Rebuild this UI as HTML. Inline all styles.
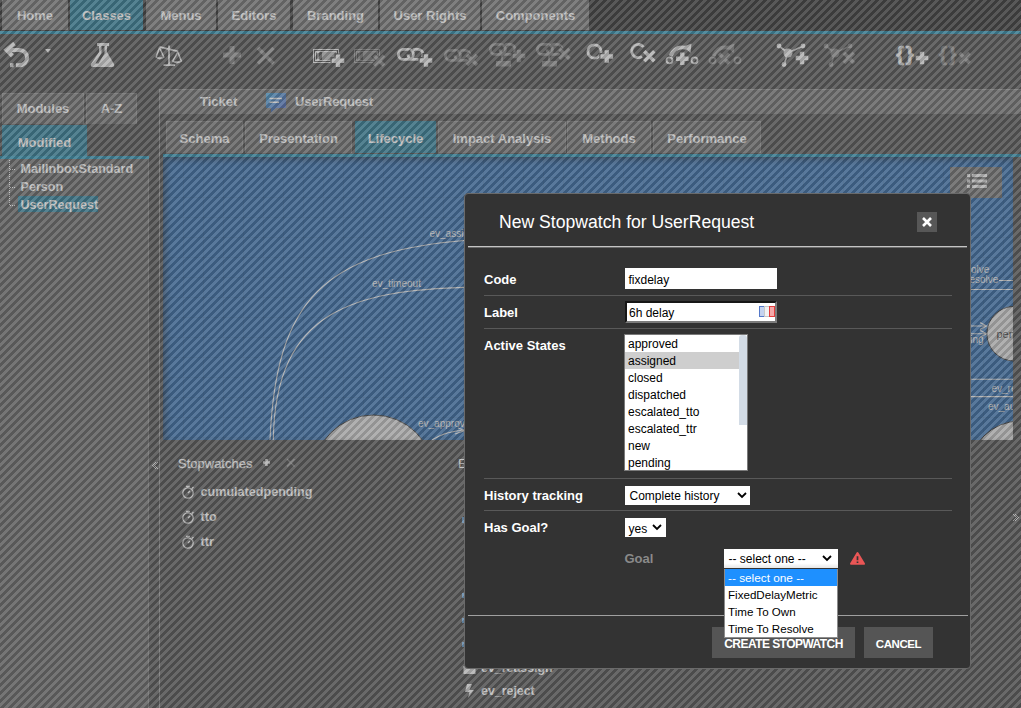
<!DOCTYPE html>
<html><head><meta charset="utf-8">
<style>
*{box-sizing:border-box;margin:0;padding:0}
html,body{width:1021px;height:708px;overflow:hidden}
body{position:relative;background:#474747;font-family:"Liberation Sans",sans-serif;color:#e0e0e0}
.a{position:absolute}
.t{position:absolute;white-space:nowrap;line-height:15px;font-size:13px;color:#fff}
.topbar{left:0;top:0;width:1021px;height:31px;background:#262626}
.tab{position:absolute;top:0;height:30px;background:#747474;color:#fff;font-weight:bold;font-size:13px;text-align:center;line-height:15px;padding-top:8px}
.tab.on{background:#1f7a98}
.tabline{left:0;top:31px;width:1021px;height:3px;background:#1f8fb3}
.ltab{position:absolute;background:#6a6a6a;border:1px solid #7e7e7e;border-bottom:none;color:#fff;font-weight:bold;font-size:13px;text-align:center;line-height:15px}
.ltab.on{background:#1f7a98;border-color:#1f7a98}
.overlay{left:-8px;top:0;width:1040px;height:708px;background-image:repeating-linear-gradient(-45deg,rgba(139,139,139,.5) 0px,rgba(139,139,139,.5) 2.83px,rgba(81,81,81,.5) 2.83px,rgba(81,81,81,.5) 5.66px)}
.modal{left:464px;top:193px;width:507px;height:476px;background:#333;border:1px solid #6a6a6a;border-radius:4px;color:#fff}
.lbl{position:absolute;left:19px;font-weight:bold;font-size:13px;color:#fff;line-height:15px;white-space:nowrap}
.sep{position:absolute;left:19px;width:468px;height:1px;background:#595959}
.inp{position:absolute;background:#fff;color:#000;font-size:12px;line-height:14px;white-space:nowrap}
.opt{height:17px;line-height:18px;padding-left:3px}
</style></head><body>
<!-- top bar -->
<div class="a topbar"></div>
<div class="tab" style="left:2px;width:66px">Home</div>
<div class="tab on" style="left:70px;width:73px">Classes</div>
<div class="tab" style="left:146px;width:70px">Menus</div>
<div class="tab" style="left:218px;width:72px">Editors</div>
<div class="tab" style="left:293px;width:85px">Branding</div>
<div class="tab" style="left:380px;width:100px">User Rights</div>
<div class="tab" style="left:482px;width:107px">Components</div>
<div class="a tabline"></div>

<!-- toolbar icons -->
<svg class="a" style="left:0;top:0" width="1021" height="90" viewBox="0 0 1021 90">
<defs>
<g id="pl"><path d="M-7.5 0H7.5M0 -7.5V7.5" stroke="#474747" stroke-width="7" fill="none"/><path d="M-6.3 0H6.3M0 -6.3V6.3" stroke-width="4.4" fill="none"/></g>
<g id="xx"><path d="M-6 -6L6 6M6 -6L-6 6" stroke="#474747" stroke-width="6" fill="none"/><path d="M-5 -5L5 5M5 -5L-5 5" stroke-width="3.6" fill="none"/></g>
<g id="chain" fill="none" stroke-width="2.8">
<rect x="1.4" y="1.4" width="15" height="10" rx="5"/><path d="M16 2.2A5 5 0 0 1 20.5 1.4H21A5 5 0 0 1 21 11.4H16A5 5 0 0 1 11 6.4"/>
<path d="M11.6 3.2A5 5 0 0 1 13.5 1.8" stroke="#474747" stroke-width="1.2"/>
</g>
</defs>
<g fill="#eee" stroke="#eee">
 <!-- undo -->
 <path d="M9 50H19.5A7.6 7.6 0 0 1 19.5 65.2H16" fill="none" stroke-width="4"/>
 <path d="M14.5 43.5L6.5 50L12.5 56" fill="none" stroke-width="4.2" stroke-linejoin="miter"/>
 <rect x="10" y="63.2" width="3.5" height="4" stroke="none"/>
 <path d="M45 49H51L48 53Z" stroke="none"/>
 <!-- flask -->
 <path d="M97 43H109V46H107V52L114 64Q115 67 112 67H93Q90 67 91 64L99 52V46H97Z" stroke="none"/>
 <path d="M101.5 46V53L95.5 63.5H98.5L104.5 53.5V46Z" fill="#474747" stroke="none"/>
 <!-- scales -->
 <g fill="none" stroke-width="1.5">
  <path d="M169 45.5V64.5M163.5 65.2H175M159.5 46.8L178.2 51.4" stroke-width="1.8"/>
  <path d="M159.5 47.5L156 57.5M159.5 47.5L164 57.5M177.8 52L172.5 61.5M177.8 52L181.5 61.5"/>
 </g>
 <path d="M155.3 57.3H164.7Q160 61.5 155.3 57.3Z" stroke="none"/>
 <path d="M171.8 61.3H182.2Q177 65.5 171.8 61.3Z" stroke="none"/>
 <!-- field add -->
 <rect x="313.5" y="49.5" width="25" height="13" fill="none" stroke-width="1"/>
 <rect x="315.5" y="51.5" width="21" height="9" fill="none" stroke-width="1"/>
 <path d="M322 52H336V60H322Z" fill="#aaa" stroke="none"/>
 <path d="M318 52.5V59.5M316.5 52.5H319.5M316.5 59.5H319.5" fill="none" stroke-width="1"/>
 <use href="#pl" x="338" y="60.8"/>
 <!-- link add -->
 <use href="#chain" x="397" y="48"/>
 <use href="#pl" x="426" y="60.5"/>
 <!-- state add -->
 <circle cx="594.5" cy="51.5" r="6.6" fill="none" stroke-width="2.8"/>
 <use href="#pl" x="606.8" y="56.5"/>
 <!-- state remove -->
 <path d="M643.5 47A6.6 6.6 0 1 0 642 56.5" fill="none" stroke-width="2.8"/>
 <use href="#xx" x="649.3" y="56.3"/>
 <!-- transition add -->
 <path d="M670.5 56Q675 45 687 48" fill="none" stroke-width="3.8"/>
 <path d="M683.5 46.5L691.5 43.5L690.5 53Z" stroke="none"/>
 <circle cx="669.5" cy="60.3" r="3" fill="none" stroke-width="1.8"/>
 <circle cx="694.5" cy="60.3" r="3" fill="none" stroke-width="1.8"/>
 <use href="#pl" x="682.3" y="58.8"/>
 <!-- attribute add -->
 <path d="M779 46L788 53L803 46M788 53L784 64.5" fill="none" stroke-width="1.6"/>
 <circle cx="788" cy="53" r="4.5" stroke="none"/>
 <circle cx="779" cy="46" r="2.4" stroke="none"/><circle cx="803" cy="46" r="2.4" stroke="none"/><circle cx="784" cy="64.5" r="2.4" stroke="none"/>
 <use href="#pl" x="802" y="58"/>
 <!-- braces add -->
 <text x="896" y="61" font-size="20" font-weight="bold" letter-spacing="2" stroke-width="0.7" font-family="Liberation Sans">{}</text>
 <use href="#pl" x="922" y="58"/>
</g>
<g fill="#8c8c8c" stroke="#8c8c8c">
 <path d="M223 55H241M232 46V64" stroke-width="5" fill="none"/>
 <path d="M258 48L273.5 63.5M273.5 48L258 63.5" stroke-width="3.6" fill="none"/>
 <!-- field remove -->
 <rect x="354.5" y="49.5" width="25" height="13" fill="none" stroke-width="1"/>
 <rect x="356.5" y="51.5" width="21" height="9" fill="none" stroke-width="1"/>
 <path d="M363 52H377V60H363Z" fill="#777" stroke="none"/>
 <path d="M359 52.5V59.5M357.5 52.5H360.5M357.5 59.5H360.5" fill="none" stroke-width="1"/>
 <use href="#xx" x="379" y="60.5"/>
 <!-- link remove -->
 <use href="#chain" x="444" y="49"/>
 <use href="#xx" x="472" y="60"/>
 <!-- indirect add -->
 <use href="#chain" x="489" y="43"/>
 <path d="M502 55V61" fill="none" stroke-width="1.5"/>
 <rect x="496" y="61" width="15" height="5.5" stroke="none"/>
 <use href="#pl" x="519" y="56"/>
 <!-- indirect remove -->
 <use href="#chain" x="536" y="43"/>
 <path d="M549 55V61" fill="none" stroke-width="1.5"/>
 <rect x="542" y="61" width="15" height="5.5" stroke="none"/>
 <use href="#xx" x="564.5" y="54"/>
 <!-- transition remove -->
 <path d="M713.5 56Q718 45 730 48" fill="none" stroke-width="3.8"/>
 <path d="M726.5 46.5L734.5 43.5L733.5 53Z" stroke="none"/>
 <circle cx="712.5" cy="60.3" r="3" fill="none" stroke-width="1.8"/>
 <circle cx="737.5" cy="60.3" r="3" fill="none" stroke-width="1.8"/>
 <use href="#xx" x="724" y="58.5"/>
 <!-- attribute remove -->
 <path d="M826 46L835 53L850 46M835 53L831 64.5" fill="none" stroke-width="1.6"/>
 <circle cx="835" cy="53" r="4.5" stroke="none"/>
 <circle cx="826" cy="46" r="2.4" stroke="none"/><circle cx="850" cy="46" r="2.4" stroke="none"/><circle cx="831" cy="64.5" r="2.4" stroke="none"/>
 <use href="#xx" x="849" y="58"/>
 <!-- braces remove -->
 <text x="939" y="61" font-size="20" font-weight="bold" letter-spacing="2" stroke-width="0.7" font-family="Liberation Sans">{}</text>
 <use href="#xx" x="964.5" y="58"/>
</g>
</svg>

<!-- left panel -->
<div class="ltab" style="left:2px;top:93px;width:82px;height:31px;padding-top:7px">Modules</div>
<div class="ltab" style="left:86px;top:93px;width:51px;height:31px;padding-top:7px">A-Z</div>
<div class="ltab on" style="left:2px;top:125px;width:85px;height:31px;padding-top:8.5px">Modified</div>
<div class="a" style="left:0;top:156px;width:149px;height:3px;background:#1f8fb3"></div>
<div class="a" style="left:0;top:159px;width:149px;height:549px;background:#606060;border-right:1px solid #7c7c7c"></div>
<svg class="a" style="left:0;top:150px" width="30" height="70">
 <path d="M9.5 10V56M10 19.5H15M10 37.5H15M10 55.5H15" stroke="#fff" stroke-width="1" stroke-dasharray="1 1" fill="none"/>
</svg>
<div class="a" style="left:18px;top:196px;width:80px;height:16px;background:#1f7a98"></div>
<div class="t" style="left:20.5px;top:162px;font-weight:bold;font-size:12.6px">MailInboxStandard</div>
<div class="t" style="left:20.5px;top:180px;font-weight:bold;font-size:12.6px">Person</div>
<div class="t" style="left:20.5px;top:198px;font-weight:bold;font-size:12.6px">UserRequest</div>

<!-- right container -->
<div class="a" style="left:159px;top:89px;width:862px;height:25px;background:#6c6c6c;border-top:1px solid #8a8a8a;border-left:1px solid #8a8a8a"></div>
<div class="t" style="left:200px;top:94px;font-weight:bold">Ticket</div>
<svg class="a" style="left:265px;top:92px" width="22" height="22">
 <defs><linearGradient id="bg1" x1="0" y1="0" x2="1" y2="1"><stop offset="0" stop-color="#3aa0d8"/><stop offset="1" stop-color="#4a5ab8"/></linearGradient></defs>
 <path d="M1 1H21V16H11L6 20.5V16H1Z" fill="url(#bg1)"/>
 <path d="M4.5 6.5H17M4.5 10.3H14" stroke="#fff" stroke-width="1.6"/>
</svg>
<div class="t" style="left:295px;top:94px;font-weight:bold;letter-spacing:-0.2px">UserRequest</div>
<div class="a" style="left:159px;top:114px;width:1px;height:594px;background:#8a8a8a"></div>
<div class="a" style="left:149px;top:158px;width:10px;height:550px;background:#474747"></div>
<div class="ltab" style="left:166px;top:121px;width:77px;height:32px;padding-top:9px">Schema</div>
<div class="ltab" style="left:245px;top:121px;width:107px;height:32px;padding-top:9px">Presentation</div>
<div class="ltab on" style="left:355px;top:121px;width:81px;height:32px;padding-top:9px">Lifecycle</div>
<div class="ltab" style="left:438px;top:121px;width:128px;height:32px;padding-top:9px">Impact Analysis</div>
<div class="ltab" style="left:567px;top:121px;width:84px;height:32px;padding-top:9px">Methods</div>
<div class="ltab" style="left:653px;top:121px;width:108px;height:32px;padding-top:9px">Performance</div>
<div class="a" style="left:163px;top:154px;width:858px;height:3px;background:#1f8fb3"></div>

<!-- graph -->
<svg class="a" style="left:163px;top:157px" width="850" height="283" viewBox="163 157 850 283">
 <rect x="163" y="157" width="850" height="283" fill="#2666ac"/>
 <defs><pattern id="grid" x="164" y="158" width="20" height="20" patternUnits="userSpaceOnUse"><path d="M19.5 0V20M0 19.5H20" stroke="#000" stroke-opacity=".07" stroke-width="1" fill="none"/></pattern></defs>
 <rect x="163" y="157" width="850" height="283" fill="url(#grid)"/>
 <g fill="none" stroke="#e8e8e8" stroke-width="1.1">
  <path d="M270 440C276 300 323.5 251 470 240"/>
  <path d="M273.3 440C275 309.5 355 290.3 470 287.1"/>
  <path d="M432 440Q446 431 466 430M458 428L465 430.5L455 434"/>
  <path d="M999 280.5H1013M971 289.5H1013M971 379.3H1013M971 396.6H1013"/>
  <path d="M971 326H986M971 333.8H986M980 322.5L986.5 326L980 329.5M980 330.3L986.5 333.8L980 337.3"/>
 </g>
 <circle cx="373.5" cy="475.5" r="60.5" fill="#d6d6d6" stroke="#2a2a2a" stroke-width="1"/>
 <circle cx="1014.2" cy="333.7" r="27.3" fill="#d6d6d6" stroke="#2a2a2a" stroke-width="1"/>
 <circle cx="1020" cy="472" r="51" fill="#d6d6d6" stroke="#2a2a2a" stroke-width="1"/>
 <g font-family="Liberation Sans" font-size="10" fill="#e8e8e8">
  <text x="429.5" y="236.5">ev_assign</text>
  <text x="372" y="286.5">ev_timeout</text>
  <text x="418" y="427">ev_approve</text>
  <text x="957" y="272.5">resolve</text>
  <text x="950" y="282.5">ev_resolve</text>
  <text x="991.5" y="391.5">ev_reopen</text>
  <text x="988" y="410">ev_autoclose</text>
  <text x="948" y="342.5">pending</text>
 </g>
 <text x="996.5" y="338" font-family="Liberation Sans" font-size="11" fill="#333">pending</text>
</svg>
<div class="a" style="left:163px;top:157px;width:850px;height:283px;box-shadow:inset 3px 3px 6px rgba(0,0,0,.45)"></div>
<div class="a" style="left:950px;top:167px;width:52px;height:31px;background:#6c6c6c"></div>
<svg class="a" style="left:965px;top:172px" width="24" height="20">
 <g fill="#eee"><rect x="2" y="2" width="3" height="3"/><rect x="2" y="7.5" width="3" height="3"/><rect x="2" y="13" width="3" height="3"/>
 <rect x="7" y="2" width="15" height="3"/><rect x="7" y="7.5" width="15" height="3"/><rect x="7" y="13" width="15" height="3"/></g>
</svg>

<!-- bottom panel -->
<svg class="a" style="left:149px;top:455px" width="12" height="20" shape-rendering="crispEdges"><g fill="#ddd"><rect x="6" y="7" width="1" height="1"/><rect x="5" y="8" width="1" height="1"/><rect x="4" y="9" width="1" height="1"/><rect x="3" y="10" width="1" height="1"/><rect x="4" y="11" width="1" height="1"/><rect x="5" y="12" width="1" height="1"/><rect x="6" y="13" width="1" height="1"/><rect x="8" y="7" width="1" height="1"/><rect x="7" y="8" width="1" height="1"/><rect x="6" y="9" width="1" height="1"/><rect x="5" y="10" width="1" height="1"/><rect x="6" y="11" width="1" height="1"/><rect x="7" y="12" width="1" height="1"/><rect x="8" y="13" width="1" height="1"/></g></svg>
<svg class="a" style="left:1010px;top:507px" width="11" height="20" shape-rendering="crispEdges"><g fill="#ddd"><rect x="3" y="7" width="1" height="1"/><rect x="4" y="8" width="1" height="1"/><rect x="5" y="9" width="1" height="1"/><rect x="6" y="10" width="1" height="1"/><rect x="5" y="11" width="1" height="1"/><rect x="4" y="12" width="1" height="1"/><rect x="3" y="13" width="1" height="1"/><rect x="5" y="7" width="1" height="1"/><rect x="6" y="8" width="1" height="1"/><rect x="7" y="9" width="1" height="1"/><rect x="8" y="10" width="1" height="1"/><rect x="7" y="11" width="1" height="1"/><rect x="6" y="12" width="1" height="1"/><rect x="5" y="13" width="1" height="1"/></g></svg>
<div class="t" style="left:178px;top:455.5px;color:#fff;-webkit-text-stroke:0.25px #fff">Stopwatches</div>
<svg class="a" style="left:258px;top:455px" width="45" height="16">
 <path d="M8.5 4V11M5 7.5H12" stroke="#eee" stroke-width="2.6"/>
 <path d="M29 4L36.5 11.5M36.5 4L29 11.5" stroke="#8c8c8c" stroke-width="1.3"/>
</svg>
<svg class="a" style="left:180px;top:484px" width="16" height="70">
 <g fill="none" stroke="#eee" stroke-width="1.3">
  <circle cx="8" cy="9" r="5.2"/><path d="M6 2.5H10M8 2.5V4M12 4.5L13.5 3M8 9L10 7"/>
  <circle cx="8" cy="34" r="5.2"/><path d="M6 27.5H10M8 27.5V29M12 29.5L13.5 28M8 34L10 32"/>
  <circle cx="8" cy="59" r="5.2"/><path d="M6 52.5H10M8 52.5V54M12 54.5L13.5 53M8 59L10 57"/>
 </g>
</svg>
<div class="t" style="left:200.5px;top:485px;font-weight:bold;font-size:12.6px">cumulatedpending</div>
<div class="t" style="left:200.5px;top:510px;font-weight:bold;font-size:12.6px">tto</div>
<div class="t" style="left:200.5px;top:535px;font-weight:bold;font-size:12.6px">ttr</div>
<div class="t" style="left:458px;top:455.5px;color:#fff">Events</div>
<div class="a" style="left:462px;top:517px;width:2px;height:6px;background:#6aa8e0"></div>
<div class="a" style="left:462px;top:593px;width:2px;height:5px;background:#6aa8e0"></div>
<div class="a" style="left:462px;top:618px;width:2px;height:5px;background:#6aa8e0"></div>
<div class="a" style="left:462px;top:642px;width:2px;height:5px;background:#6aa8e0"></div>
<svg class="a" style="left:460px;top:660px" width="20" height="45">
 <rect x="3.5" y="6" width="12" height="8" fill="#eee"/>
 <path d="M7 24L12 24L9.5 30L14 30L8 38L9.5 32L5 32Z" fill="#eee"/>
</svg>
<div class="t" style="left:481px;top:660.5px;font-weight:bold;font-size:12.4px">ev_reassign</div>
<div class="t" style="left:481px;top:683.5px;font-weight:bold;font-size:12.4px">ev_reject</div>

<!-- overlay -->
<div class="a overlay"></div>

<!-- modal -->
<div class="a modal">
  <div class="a" style="left:34px;top:18px;font-size:17.6px;line-height:20px;color:#fff;white-space:nowrap">New Stopwatch for UserRequest</div>
  <div class="a" style="left:452px;top:18px;width:20px;height:20px;background:#575757"></div>
  <svg class="a" style="left:452px;top:18px" width="20" height="20"><path d="M6 6L14 14M14 6L6 14" stroke="#fff" stroke-width="2.6"/></svg>
  <div class="a" style="left:3px;top:52px;width:499px;height:1px;background:#c4c4c4"></div><div class="a" style="left:3px;top:53px;width:499px;height:1px;background:#6a6a6a"></div>

  <div class="lbl" style="top:78px">Code</div>
  <div class="inp" style="left:159.5px;top:74px;width:152px;height:21px;padding:5px 0 0 4px">fixdelay</div>
  <div class="sep" style="top:101px"></div>
  <div class="lbl" style="top:110.5px">Label</div>
  <div class="inp" style="left:160px;top:107px;width:152px;height:22px;border-top:2px solid #161616;border-left:2px solid #161616;border-bottom:2px solid #7c7c7c;border-right:2px solid #7c7c7c;padding:2.5px 0 0 2px">6h delay</div>
  <svg class="a" style="left:294px;top:112px" width="17" height="12" shape-rendering="crispEdges">
   <rect x="0.5" y="0.5" width="5" height="10" fill="#c4d2ee" stroke="#5478c8"/>
   <rect x="5.5" y="0.5" width="5" height="10" fill="#f2f2f2" stroke="#c8c8c8"/>
   <rect x="10.5" y="0.5" width="5" height="10" fill="#f4a8a8" stroke="#e43c3c"/>
  </svg>
  <div class="sep" style="top:134px"></div>
  <div class="lbl" style="top:143.5px">Active States</div>
  <div class="inp" style="left:159px;top:140px;width:124px;height:137px;border:1px solid #7a7a7a;overflow:hidden;padding-top:0px">
    <div class="opt">approved</div>
    <div class="opt" style="background:#cecece;width:114px">assigned</div>
    <div class="opt">closed</div>
    <div class="opt">dispatched</div>
    <div class="opt">escalated_tto</div>
    <div class="opt">escalated_ttr</div>
    <div class="opt">new</div>
    <div class="opt">pending</div>
    <div class="a" style="left:114px;top:0px;width:8px;height:90px;background:#d3dce6;border-radius:3px 3px 0 0"></div>
  </div>
  <div class="sep" style="top:284px"></div>
  <div class="lbl" style="top:294px">History tracking</div>
  <div class="inp" style="left:159.5px;top:292px;width:125px;height:18.5px;padding:3px 0 0 5px">Complete history</div>
  <svg class="a" style="left:271px;top:296px" width="12" height="10"><path d="M2 3L6 7L10 3" stroke="#000" stroke-width="1.8" fill="none"/></svg>
  <div class="sep" style="top:316px"></div>
  <div class="lbl" style="top:325.5px">Has Goal?</div>
  <div class="inp" style="left:159.5px;top:324px;width:41px;height:18.5px;padding:3.5px 0 0 4px">yes</div>
  <svg class="a" style="left:186px;top:328px" width="12" height="10"><path d="M2 3L6 7L10 3" stroke="#000" stroke-width="1.8" fill="none"/></svg>
  <div class="lbl" style="left:159.5px;top:356.5px;color:#8a8a8a">Goal</div>
  <div class="inp" style="left:258.5px;top:354.5px;width:114px;height:19px;background:linear-gradient(#fff 75%,#e6e6e6);padding:3px 0 0 5px">-- select one --</div>
  <svg class="a" style="left:356px;top:359px" width="12" height="10"><path d="M2 3L6 7L10 3" stroke="#000" stroke-width="1.8" fill="none"/></svg>
  <svg class="a" style="left:384px;top:357px" width="18" height="15"><path d="M8.5 2L15 12.8H2Z" fill="#ea5656" stroke="#ea5656" stroke-width="2" stroke-linejoin="round"/><path d="M8.5 5.2V9.2M8.5 10.4V12" stroke="#333" stroke-width="1.7"/></svg>
  <div class="inp" style="left:258.5px;top:374.5px;width:114px;height:69px;border:1px solid #8c8c8c;border-top:none;overflow:hidden;z-index:3">
    <div class="opt" style="background:#1e90ff;color:#fff;padding-left:3.5px;line-height:18px;font-size:11.8px">-- select one --</div>
    <div class="opt" style="padding-left:3.5px;line-height:18px;font-size:11.6px">FixedDelayMetric</div>
    <div class="opt" style="padding-left:3.5px;line-height:18px;font-size:11.6px">Time To Own</div>
    <div class="opt" style="padding-left:3.5px;line-height:18px;font-size:11.6px">Time To Resolve</div>
  </div>
  <div class="a" style="left:3px;top:421px;width:500px;height:1px;background:#a0a0a0"></div>
  <div class="a" style="left:247px;top:433px;width:143px;height:31px;background:#555;color:#fff;font-weight:bold;font-size:12px;letter-spacing:-0.55px;line-height:14px;padding-top:10px;text-align:center">CREATE STOPWATCH</div>
  <div class="a" style="left:399px;top:433px;width:69px;height:31px;background:#555;color:#fff;font-weight:bold;font-size:11.5px;letter-spacing:-0.4px;line-height:14px;padding-top:10px;text-align:center">CANCEL</div>
</div>
</body></html>
